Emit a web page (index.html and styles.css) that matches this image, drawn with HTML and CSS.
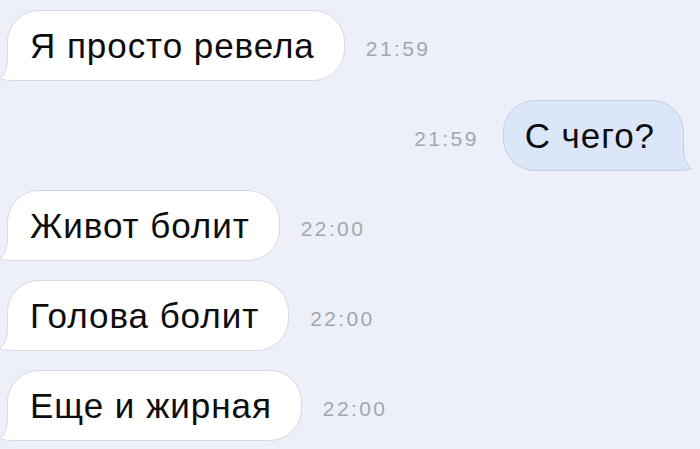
FILE: index.html
```html
<!DOCTYPE html>
<html lang="ru">
<head>
<meta charset="utf-8">
<title>Чат</title>
<link rel="stylesheet" href="styles.css">
</head>
<body>
<div class="chat">
  <div class="row in">
    <div class="bubble">Я просто ревела<svg class="tail" width="30" height="26" viewBox="0 0 30 26"><path class="tf" d="M8.5 1 C8.5 13 6 19.5 0.5 23.5 C6 25.5 12 25.5 17 25.5 L30 25.5 L30 1 Z"/><path class="ts" d="M8.5 1 C8.5 13 6 19.5 0.5 23.5 C6 25.5 12 25.5 17 25.5 L30 25.5"/></svg></div>
    <span class="time">21:59</span>
  </div>
  <div class="row out">
    <span class="time">21:59</span>
    <div class="bubble blue">С чего?<svg class="tail" width="30" height="26" viewBox="0 0 30 26"><path class="tf" d="M8.5 1 C8.5 13 6 19.5 0.5 23.5 C6 25.5 12 25.5 17 25.5 L30 25.5 L30 1 Z"/><path class="ts" d="M8.5 1 C8.5 13 6 19.5 0.5 23.5 C6 25.5 12 25.5 17 25.5 L30 25.5"/></svg></div>
  </div>
  <div class="row in">
    <div class="bubble">Живот болит<svg class="tail" width="30" height="26" viewBox="0 0 30 26"><path class="tf" d="M8.5 1 C8.5 13 6 19.5 0.5 23.5 C6 25.5 12 25.5 17 25.5 L30 25.5 L30 1 Z"/><path class="ts" d="M8.5 1 C8.5 13 6 19.5 0.5 23.5 C6 25.5 12 25.5 17 25.5 L30 25.5"/></svg></div>
    <span class="time">22:00</span>
  </div>
  <div class="row in">
    <div class="bubble">Голова болит<svg class="tail" width="30" height="26" viewBox="0 0 30 26"><path class="tf" d="M8.5 1 C8.5 13 6 19.5 0.5 23.5 C6 25.5 12 25.5 17 25.5 L30 25.5 L30 1 Z"/><path class="ts" d="M8.5 1 C8.5 13 6 19.5 0.5 23.5 C6 25.5 12 25.5 17 25.5 L30 25.5"/></svg></div>
    <span class="time">22:00</span>
  </div>
  <div class="row in">
    <div class="bubble">Еще и жирная<svg class="tail" width="30" height="26" viewBox="0 0 30 26"><path class="tf" d="M8.5 1 C8.5 13 6 19.5 0.5 23.5 C6 25.5 12 25.5 17 25.5 L30 25.5 L30 1 Z"/><path class="ts" d="M8.5 1 C8.5 13 6 19.5 0.5 23.5 C6 25.5 12 25.5 17 25.5 L30 25.5"/></svg></div>
    <span class="time">22:00</span>
  </div>
</div>
</body>
</html>
```
FILE: styles.css
```css
html, body {
  margin: 0;
  padding: 0;
}
body {
  background: #edf0f8;
  width: 700px;
  height: 449px;
  overflow: hidden;
  font-family: "Liberation Sans", Arial, sans-serif;
}
.chat {
  display: flex;
  flex-direction: column;
  gap: 19px;
  padding: 10px 0 0 0;
}
.row {
  display: flex;
  align-items: center;
}
.row.in {
  padding-left: 7px;
}
.row.out {
  justify-content: flex-end;
  padding-right: 16px;
}
.bubble {
  position: relative;
  box-sizing: border-box;
  height: 71px;
  line-height: 69px;
  padding: 0 29px 0 22px;
  background: #ffffff;
  border: 1px solid #d5d9e1;
  border-radius: 32px;
  border-bottom-left-radius: 18px;
  font-size: 35px;
  letter-spacing: 0.95px;
  color: #0d0d0d;
  white-space: nowrap;
}
.bubble.blue {
  background: #dbe6f8;
  border-color: #c3cee2;
  padding: 0 28px 0 21px;
  border-bottom-left-radius: 32px;
  border-bottom-right-radius: 18px;
}
.tail {
  position: absolute;
  left: -9px;
  bottom: -1px;
  display: block;
}
.tail .tf {
  fill: #ffffff;
}
.tail .ts {
  fill: none;
  stroke: #d5d9e1;
  stroke-width: 1;
}
.blue .tail {
  left: auto;
  right: -9px;
  transform: scaleX(-1);
}
.blue .tail .tf {
  fill: #dbe6f8;
}
.blue .tail .ts {
  stroke: #c3cee2;
}
.time {
  font-size: 21px;
  letter-spacing: 2.4px;
  color: #a3a7ae;
  margin-top: 6px;
}
.row.in .time {
  margin-left: 21px;
}
.row.out .time {
  margin-right: 24px;
}
```
